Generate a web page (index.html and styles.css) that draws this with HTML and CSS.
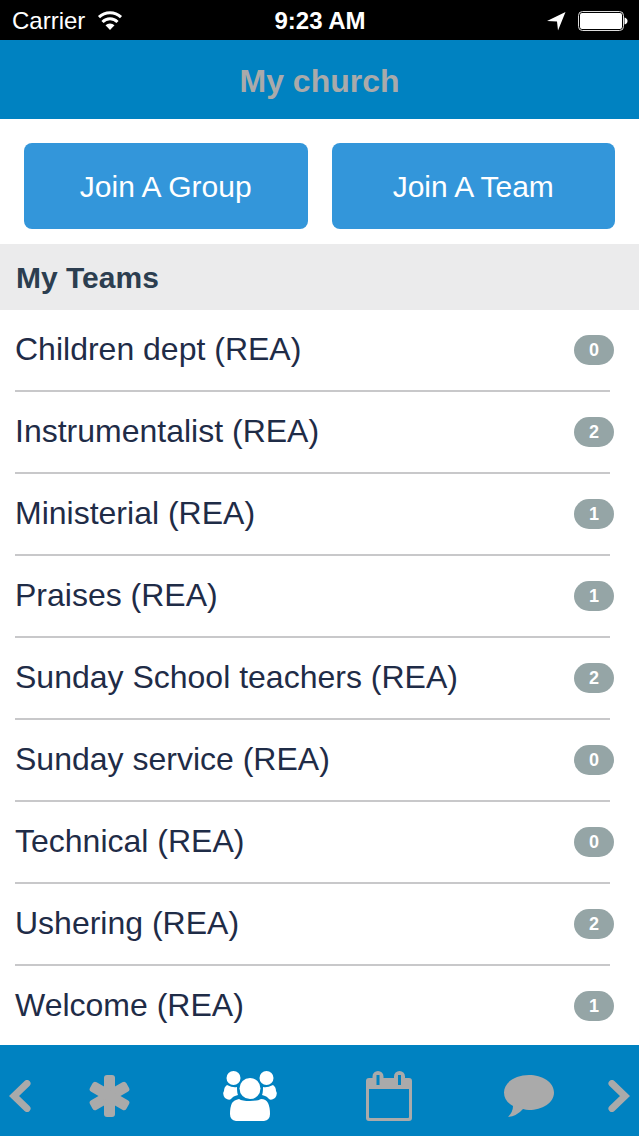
FILE: index.html
```
<!DOCTYPE html>
<html lang="en">
  <head>
    <meta charset="UTF-8">
    <meta name="viewport" content="width=device-width, initial-scale=1.0">
    <title>My church</title>
    <link rel="stylesheet" href="styles.css">
  </head>
  <body>

    <div class="status-bar">
      <div class="status-left">
        <span>Carrier</span>
        <svg class="wifi" width="26" height="20" viewBox="0 0 26 20">
          <path d="M2 6.200a16 16 0 0 1 22 0" fill="none" stroke="#fff" stroke-width="3"/>
          <path d="M5.500 11a10.500 10.500 0 0 1 15 0" fill="none" stroke="#fff" stroke-width="3"/>
          <path d="M8.500 14.300a6.400 6.400 0 0 1 9 0L13 19z" fill="#fff"/>
        </svg>
      </div>
      <div class="status-time">9:23 AM</div>
      <div class="status-right">
        <svg width="20" height="20" viewBox="0 0 20 20">
          <path d="M19.500 1L12 19.500 11 10.500 1 10z" fill="#fff"/>
        </svg>
        <svg width="50" height="20" viewBox="0 0 50 20">
          <rect x="0.5" y="0.5" width="45" height="19" rx="4" fill="none" stroke="#ddd"/>
          <rect x="2" y="2" width="42" height="16" rx="2" fill="#fff"/>
          <path d="M46.500 6.500q3 1 3 3.500t-3 3.500z" fill="#fff"/>
        </svg>
      </div>
    </div>

    <header class="title-bar">
      <h1>My church</h1>
    </header>

    <div class="actions">
      <button type="button">Join A Group</button>
      <button type="button">Join A Team</button>
    </div>

    <h2 class="section-title">My Teams</h2>

    <ul class="teams">
      <li><a href="#">Children dept (REA)</a><span class="badge">0</span></li>
      <li><a href="#">Instrumentalist (REA)</a><span class="badge">2</span></li>
      <li><a href="#">Ministerial (REA)</a><span class="badge">1</span></li>
      <li><a href="#">Praises (REA)</a><span class="badge">1</span></li>
      <li><a href="#">Sunday School teachers (REA)</a><span class="badge">2</span></li>
      <li><a href="#">Sunday service (REA)</a><span class="badge">0</span></li>
      <li><a href="#">Technical (REA)</a><span class="badge">0</span></li>
      <li><a href="#">Ushering (REA)</a><span class="badge">2</span></li>
      <li><a href="#">Welcome (REA)</a><span class="badge">1</span></li>
    </ul>

    <nav class="tab-bar">
      <button type="button" class="arrow" aria-label="Previous">
        <svg width="22" height="32" viewBox="0 0 22 32">
          <path d="M18 3.500L5 16 18 28.500" fill="none" stroke="currentColor" stroke-width="7" stroke-linecap="round"/>
        </svg>
      </button>
      <button type="button" aria-label="Home">
        <svg width="42" height="42" viewBox="0 0 42 42">
          <g fill="currentColor">
            <rect x="15" y="0" width="11" height="42" rx="3"/>
            <rect x="15" y="0" width="11" height="42" rx="3" transform="rotate(60 20.500 21)"/>
            <rect x="15" y="0" width="11" height="42" rx="3" transform="rotate(-60 20.500 21)"/>
          </g>
        </svg>
      </button>
      <button type="button" class="active" aria-label="My church">
        <svg width="54" height="50" viewBox="0 0 54 50">
          <g fill="currentColor">
            <circle cx="10.500" cy="7" r="7"/>
            <circle cx="43.500" cy="7" r="7"/>
            <circle cx="27" cy="17.500" r="10.500"/>
            <path d="M4 14q6 3 10 2 0 6 1 8-5 1-7 4-2 2-6-1-3-4-1-7 0-4 3-6z"/>
            <path d="M50 14q-6 3-10 2 0 6-1 8 5 1 7 4 2 2 6-1 3-4 1-7 0-4-3-6z"/>
            <path d="M16 28q3 2 11 2t11-2q5 0 7 4 2 4 2 11 0 6-6 7H13q-6-1-6-7 0-7 2-11 2-3 7-4z"/>
          </g>
        </svg>
      </button>
      <button type="button" aria-label="Calendar">
        <svg width="48" height="50" viewBox="0 0 48 50">
          <path fill="currentColor" fill-rule="evenodd" d="M4 7H7.500V5.500a5.500 5.500 0 0 1 11 0V7H29V5.500a5.500 5.500 0 0 1 11 0V7H44q3 0 3 3V47q0 3-3 3H4q-3 0-3-3V10q0-3 3-3zM4 18V46q0 1 1 1H43q1 0 1-1V18zM11.500 4V14H14.500V4zM33 4V14H36V4z"/>
        </svg>
      </button>
      <button type="button" aria-label="Messages">
        <svg width="50" height="44" viewBox="0 0 50 44">
          <path fill="currentColor" d="M25 1C38 1 50 8 50 18.500S38 36 25 36q-3 0-6-1-6 7-15 8 5-5 5-11Q0 27 0 18.500C0 8 12 1 25 1z"/>
        </svg>
      </button>
      <button type="button" class="arrow" aria-label="Next">
        <svg width="22" height="32" viewBox="0 0 22 32">
          <path d="M4 3.500L17 16 4 28.500" fill="none" stroke="currentColor" stroke-width="7" stroke-linecap="round"/>
        </svg>
      </button>
    </nav>

  </body>
</html>
```
FILE: styles.css
```
*, *:before, *:after {
  box-sizing: border-box;
}
body {
  display: flex;
  flex-direction: column;
  height: 100vh;
  margin: 0;
  font-family: 'Liberation Sans', Arial, sans-serif;
  background-color: #fff;
}
h1, h2, ul {
  margin: 0;
  padding: 0;
}
button {
  border: none;
  font-family: inherit;
  cursor: pointer;
}
svg {
  display: block;
}

/* status bar */
.status-bar {
  display: flex;
  align-items: center;
  flex-shrink: 0;
  height: 40px;
  padding: 1px 11px 0 12px;
  font-size: 24px;
  color: #fff;
  background-color: #000;
}
.status-left,
.status-right {
  display: flex;
  flex: 1;
  align-items: center;
  gap: 12px;
}
.status-right {
  justify-content: flex-end;
}
.status-time {
  font-weight: bold;
}

/* header */
.title-bar {
  display: flex;
  align-items: center;
  justify-content: center;
  flex-shrink: 0;
  height: 79px;
  padding-top: 4px;
  color: #aaa;
  background-color: #0082c1;
}
.title-bar h1 {
  font-size: 32px;
}
.actions {
  display: flex;
  flex-shrink: 0;
  gap: 24px;
  padding: 24px 24px 15px;
}
.actions button {
  flex: 1;
  height: 86px;
  padding: 2px 0 0;
  border-radius: 8px;
  font-size: 30px;
  color: #fff;
  background-color: #3396da;
}

/* team list */
.section-title {
  flex-shrink: 0;
  padding: 2px 16px 0;
  font-size: 30px;
  line-height: 64px;
  color: #2c3e50;
  background-color: #ebebec;
}
.teams {
  flex: 1;
  overflow: hidden;
  list-style: none;
}
.teams li {
  display: flex;
  align-items: center;
  justify-content: space-between;
  height: 82px;
  margin: 0 29px 0 15px;
  border-bottom: 2px solid #c8c8ca;
}
.teams a {
  flex: 1;
  padding-bottom: 2px;
  font-size: 32px;
  line-height: 78px;
  color: #1f2c47;
  text-decoration: none;
}
.badge {
  width: 40px;
  margin-right: -4px;
  border-radius: 15px;
  font-size: 18px;
  font-weight: bold;
  line-height: 30px;
  text-align: center;
  color: #fff;
  background-color: #95a5a6;
}

/* bottom tabs */
.tab-bar {
  display: flex;
  flex-shrink: 0;
  height: 91px;
  background-color: #0082c1;
}
.tab-bar button {
  display: flex;
  flex: 1;
  align-items: center;
  justify-content: center;
  padding: 10px 0 0;
  color: #aaa;
  background: none;
}
.tab-bar .arrow {
  flex: 0 0 40px;
}
.tab-bar .active {
  color: #fff;
}
```
